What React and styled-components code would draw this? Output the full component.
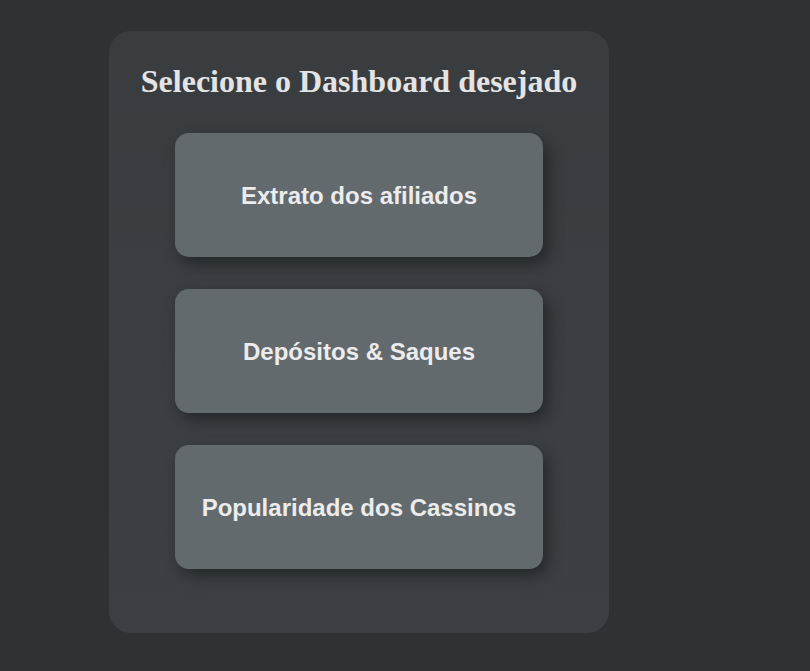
import React from "react";
import styled, { createGlobalStyle } from "styled-components";

const Global = createGlobalStyle`
  html, body { margin: 0; padding: 0; background: #2f3235; }
  body { min-height: 671px; }
`;

const Page = styled.div`
  min-height: 671px;
  background: #2f3235;
  padding: 31px 0 0 109px;
  box-sizing: border-box;
`;

const Panel = styled.div`
  width: 500px;
  box-sizing: border-box;
  padding: 32px 66px 64px;
  border-radius: 22px;
  background: linear-gradient(180deg, #393d40 0%, #3c4044 100%);
  display: flex;
  flex-direction: column;
  align-items: center;
`;

const Title = styled.h1`
  margin: 0 0 33px;
  font-family: "Liberation Serif", "Times New Roman", serif;
  font-weight: 700;
  font-size: 32px;
  line-height: 37px;
  color: #e4e4e4;
  white-space: nowrap;
`;

const List = styled.div`
  display: flex;
  flex-direction: column;
  gap: 32px;
  width: 368px;
`;

const Card = styled.button`
  height: 124px;
  width: 100%;
  padding: 2px 0 0;
  border: none;
  border-radius: 14px;
  background: #636a6e;
  color: #ececec;
  font-family: "Liberation Sans", Arial, sans-serif;
  font-weight: 700;
  font-size: 24px;
  box-shadow: 5px 7px 16px rgba(0, 0, 0, 0.38);
  cursor: pointer;
  display: flex;
  align-items: center;
  justify-content: center;
`;

export default function App() {
  const items = ["Extrato dos afiliados", "Depósitos & Saques", "Popularidade dos Cassinos"];
  return (
    <>
      <Global />
      <Page>
        <Panel>
          <Title>Selecione o Dashboard desejado</Title>
          <List>
            {items.map((t) => (
              <Card key={t}>{t}</Card>
            ))}
          </List>
        </Panel>
      </Page>
    </>
  );
}
